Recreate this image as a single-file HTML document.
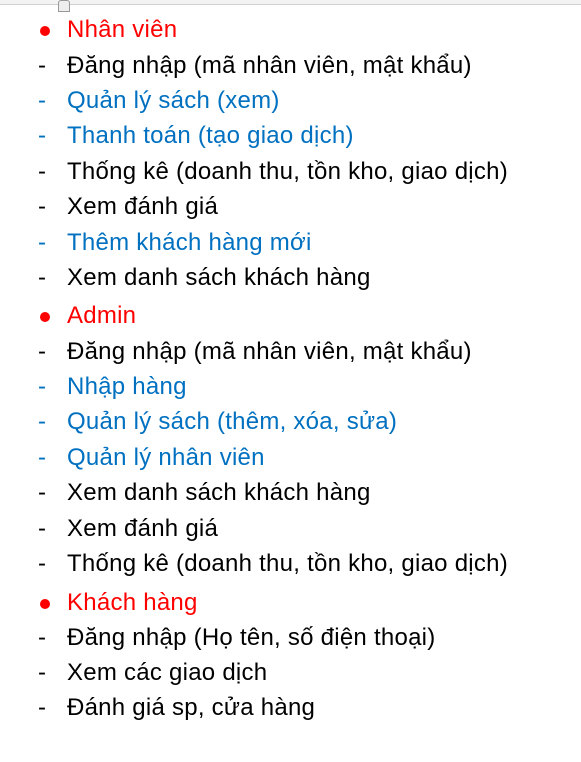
<!DOCTYPE html>
<html><head><meta charset="utf-8"><style>
body{margin:0;width:581px;height:762px;background:#fff;position:relative;overflow:hidden;font-family:"Liberation Sans",sans-serif;}
.rul{position:absolute;left:0;top:0;width:581px;height:4px;background:#f3f3f3;border-bottom:1px solid #d0d0d0}
.l{position:absolute;left:0;height:30px;line-height:30px;font-size:24px;white-space:nowrap;color:#000;letter-spacing:0.25px}
.l span.m{position:absolute;left:38px}
.l span.t{position:absolute;left:67px}
.r{color:#ff0000}.b{color:#0070c0}
.dot{position:absolute;left:40px;top:11px;width:10px;height:10px;border-radius:50%;background:#ff0000}
</style></head><body>
<div class="rul"></div>
<div style="position:absolute;left:58px;top:0;width:10px;height:10px;background:#eee;border:1px solid #999;border-radius:3px 3px 0 0"></div>
<div class="l r" style="top:15px"><div class="dot"></div><span class="t">Nhân viên</span></div>
<div class="l" style="top:51px"><span class="m">-</span><span class="t">Đăng nhập (mã nhân viên, mật khẩu)</span></div>
<div class="l b" style="top:86px"><span class="m">-</span><span class="t">Quản lý sách (xem)</span></div>
<div class="l b" style="top:121px"><span class="m">-</span><span class="t">Thanh toán (tạo giao dịch)</span></div>
<div class="l" style="top:157px"><span class="m">-</span><span class="t">Thống kê (doanh thu, tồn kho, giao dịch)</span></div>
<div class="l" style="top:192px"><span class="m">-</span><span class="t">Xem đánh giá</span></div>
<div class="l b" style="top:228px"><span class="m">-</span><span class="t">Thêm khách hàng mới</span></div>
<div class="l" style="top:263px"><span class="m">-</span><span class="t">Xem danh sách khách hàng</span></div>
<div class="l r" style="top:301px"><div class="dot"></div><span class="t">Admin</span></div>
<div class="l" style="top:337px"><span class="m">-</span><span class="t">Đăng nhập (mã nhân viên, mật khẩu)</span></div>
<div class="l b" style="top:372px"><span class="m">-</span><span class="t">Nhập hàng</span></div>
<div class="l b" style="top:407px"><span class="m">-</span><span class="t">Quản lý sách (thêm, xóa, sửa)</span></div>
<div class="l b" style="top:443px"><span class="m">-</span><span class="t">Quản lý nhân viên</span></div>
<div class="l" style="top:478px"><span class="m">-</span><span class="t">Xem danh sách khách hàng</span></div>
<div class="l" style="top:514px"><span class="m">-</span><span class="t">Xem đánh giá</span></div>
<div class="l" style="top:549px"><span class="m">-</span><span class="t">Thống kê (doanh thu, tồn kho, giao dịch)</span></div>
<div class="l r" style="top:588px"><div class="dot"></div><span class="t">Khách hàng</span></div>
<div class="l" style="top:623px"><span class="m">-</span><span class="t">Đăng nhập (Họ tên, số điện thoại)</span></div>
<div class="l" style="top:658px"><span class="m">-</span><span class="t">Xem các giao dịch</span></div>
<div class="l" style="top:693px"><span class="m">-</span><span class="t">Đánh giá sp, cửa hàng</span></div>
</body></html>
